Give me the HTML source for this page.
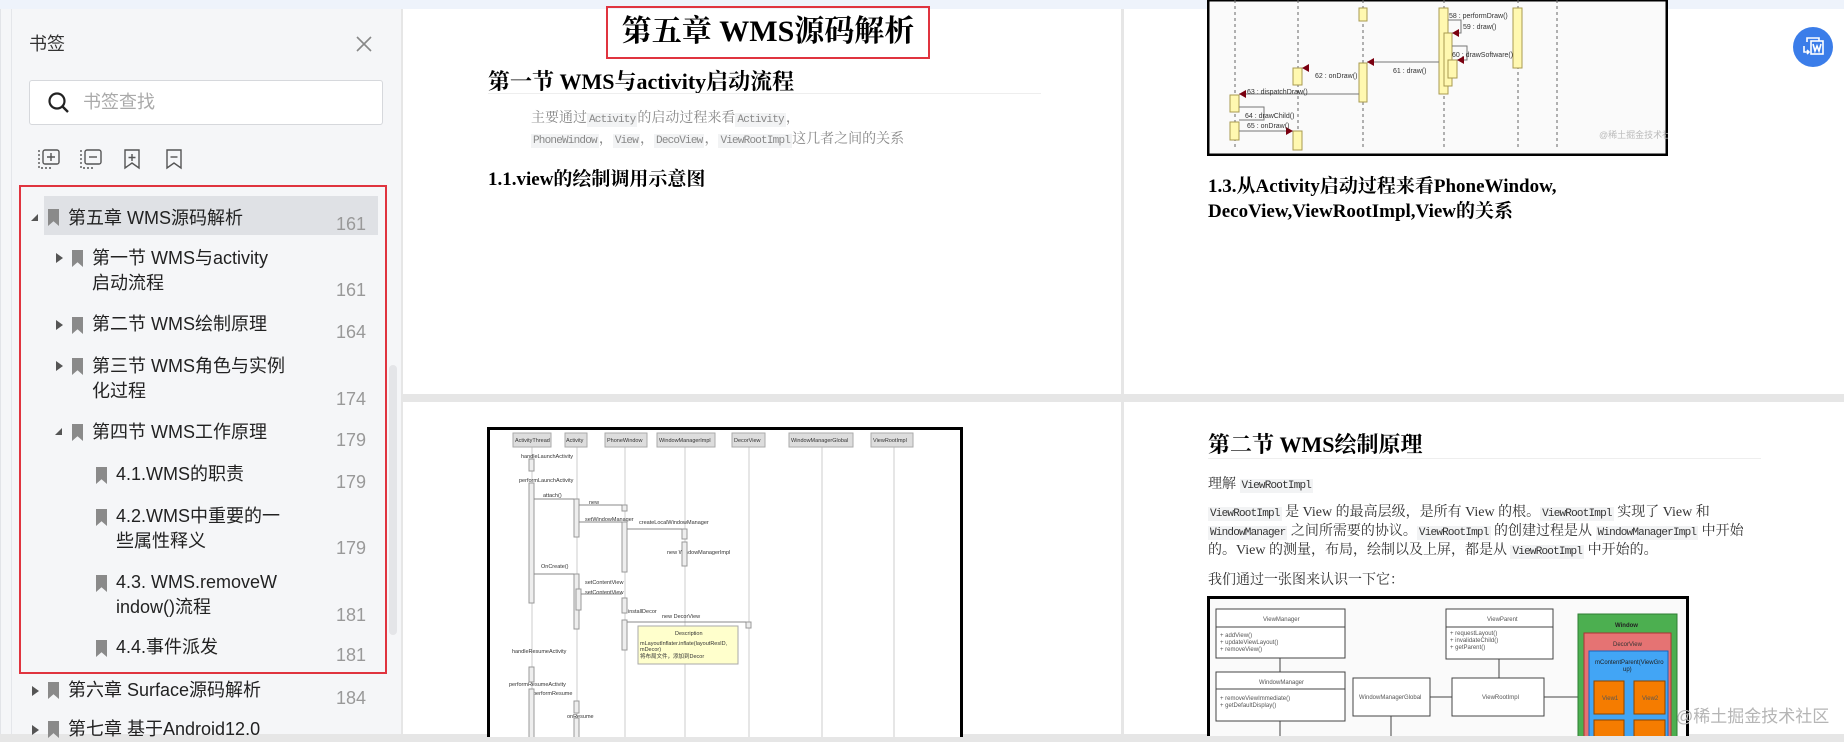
<!DOCTYPE html>
<html><head><meta charset="utf-8">
<style>
*{margin:0;padding:0;box-sizing:border-box}
body{width:1844px;height:734px;overflow:hidden;background:#e6e6e6;position:relative;font-family:"Liberation Sans","Noto Sans CJK SC",sans-serif}
.abs{position:absolute}
.top{left:0;top:0;width:1844px;height:9px;background:#eef3fb}
.side{left:0;top:9px;width:401px;height:725px;background:#f5f6f8;border-left:1px solid #e2e4e8}
.side .edge{left:10px;top:0;width:1px;height:725px;background:#e4e6ea}
.t{position:absolute;font-size:18px;color:#222;line-height:26px;white-space:nowrap}
.pg{position:absolute;font-size:18px;color:#999;right:35px;white-space:nowrap}
.bm{position:absolute;width:11px;height:17px;background:#8a8a8a;clip-path:polygon(0 0,100% 0,100% 100%,50% 72%,0 100%)}
.ar{position:absolute;width:0;height:0;border-top:5px solid transparent;border-bottom:5px solid transparent;border-left:7px solid #555}
.ad{position:absolute;width:0;height:0;border-left:7px solid transparent;border-bottom:7px solid #555}
.page{position:absolute;background:#fff}
.serif{font-family:"Liberation Serif","Noto Serif CJK SC",serif}
code{font-family:"Liberation Mono","Noto Sans CJK SC",monospace;background:#f2f3f4;font-size:11px;letter-spacing:-0.8px;padding:1px 2px}
h2{font-family:"Liberation Serif","Noto Serif CJK SC",serif;font-weight:bold}
</style></head><body>
<div class="abs top"></div>

<div class="abs side">
  <div class="abs edge"></div>
  <div class="t" style="left:28px;top:22px;color:#333">书签</div>
  <svg class="abs" style="left:355px;top:27px" width="16" height="16"><path d="M1 1L15 15M15 1L1 15" stroke="#888" stroke-width="1.6"/></svg>
  <div class="abs" style="left:28px;top:71px;width:354px;height:45px;background:#fff;border:1px solid #d6d8dc;border-radius:3px"></div>
  <svg class="abs" style="left:46px;top:82px" width="24" height="24"><circle cx="10" cy="10" r="7.5" stroke="#222" stroke-width="2.2" fill="none"/><path d="M15.5 15.5L21 21" stroke="#222" stroke-width="2.4"/></svg>
  <div class="t" style="left:82px;top:80px;color:#aaa">书签查找</div>
  <svg class="abs" style="left:36px;top:139px" width="150" height="22">
    <g stroke="#555" stroke-width="1.4" fill="none">
      <rect x="6" y="2" width="16" height="14" rx="2"/><path d="M14 5v8M10 9h8"/>
      <path d="M2 2v18h14" stroke-dasharray="2 2"/>
      <rect x="48" y="2" width="16" height="14" rx="2"/><path d="M52 9h8"/>
      <path d="M44 2v18h14" stroke-dasharray="2 2"/>
      <path d="M88 2h14v18l-7-5-7 5z"/><path d="M95 6v7M91.5 9.5h7"/>
      <path d="M130 2h14v18l-7-5-7 5z"/><path d="M133.5 9h7"/>
    </g>
  </svg>
  <div class="abs" style="left:18px;top:176px;width:368px;height:489px;border:2px solid #e0343f"></div>
  <div class="abs" style="left:43px;top:187px;width:334px;height:39px;background:#dfe1e5"></div>
  <div class="ad" style="left:30px;top:205px"></div><div class="bm" style="left:47px;top:200px"></div>
  <div class="t" style="left:67px;top:196px">第五章 WMS源码解析</div><div class="pg" style="top:205px">161</div>

  <div class="ar" style="left:55px;top:244px"></div><div class="bm" style="left:71px;top:241px"></div>
  <div class="t" style="left:91px;top:236px">第一节 WMS与activity</div><div class="t" style="left:91px;top:261px">启动流程</div><div class="pg" style="top:271px">161</div>

  <div class="ar" style="left:55px;top:311px"></div><div class="bm" style="left:71px;top:308px"></div>
  <div class="t" style="left:91px;top:302px">第二节 WMS绘制原理</div><div class="pg" style="top:313px">164</div>

  <div class="ar" style="left:55px;top:352px"></div><div class="bm" style="left:71px;top:349px"></div>
  <div class="t" style="left:91px;top:344px">第三节 WMS角色与实例</div><div class="t" style="left:91px;top:369px">化过程</div><div class="pg" style="top:380px">174</div>

  <div class="ad" style="left:54px;top:419px"></div><div class="bm" style="left:71px;top:415px"></div>
  <div class="t" style="left:91px;top:410px">第四节 WMS工作原理</div><div class="pg" style="top:421px">179</div>

  <div class="bm" style="left:95px;top:458px"></div>
  <div class="t" style="left:115px;top:452px">4.1.WMS的职责</div><div class="pg" style="top:463px">179</div>

  <div class="bm" style="left:95px;top:500px"></div>
  <div class="t" style="left:115px;top:494px">4.2.WMS中重要的一</div><div class="t" style="left:115px;top:519px">些属性释义</div><div class="pg" style="top:529px">179</div>

  <div class="bm" style="left:95px;top:566px"></div>
  <div class="t" style="left:115px;top:560px">4.3. WMS.removeW</div><div class="t" style="left:115px;top:585px">indow()流程</div><div class="pg" style="top:596px">181</div>

  <div class="bm" style="left:95px;top:631px"></div>
  <div class="t" style="left:115px;top:625px">4.4.事件派发</div><div class="pg" style="top:636px">181</div>

  <div class="ar" style="left:31px;top:677px"></div><div class="bm" style="left:47px;top:673px"></div>
  <div class="t" style="left:67px;top:668px">第六章 Surface源码解析</div><div class="pg" style="top:679px">184</div>

  <div class="ar" style="left:31px;top:716px"></div><div class="bm" style="left:47px;top:712px"></div>
  <div class="t" style="left:67px;top:707px">第七章 基于Android12.0</div>

  <div class="abs" style="left:388px;top:356px;width:8px;height:270px;background:#e4e5e8;border-radius:4px"></div>
</div>

<!-- page 1 -->
<div class="page" style="left:403px;top:9px;width:718px;height:385px">
  <div class="abs" style="left:203px;top:-3px;width:324px;height:53px;border:2px solid #e0343f"></div>
  <h2 class="abs" style="left:203px;width:324px;top:3px;text-align:center;font-size:30px;line-height:40px">第五章 WMS源码解析</h2>
  <h2 class="abs" style="left:85px;top:56px;font-size:22px">第一节 WMS与activity启动流程</h2>
  <div class="abs" style="left:85px;top:84px;width:553px;height:1px;background:#eee"></div>
  <div class="abs serif" style="left:128px;top:100px;font-size:14px;line-height:19px;color:#888">主要通过<code>Activity</code>的启动过程来看<code>Activity</code>，<br><code>PhoneWindow</code>，<code>View</code>，<code>DecoView</code>，<code>ViewRootImpl</code>这几者之间的关系</div>
  <h2 class="abs" style="left:85px;top:155px;font-size:19px">1.1.view的绘制调用示意图</h2>
</div>

<!-- page 2 -->
<div class="page" style="left:1124px;top:9px;width:720px;height:385px">
  <svg class="abs" style="left:83px;top:-9px" width="461" height="156">
    <rect x="1" y="0" width="459" height="155" fill="#fafafa" stroke="#000" stroke-width="3"/>
    <g stroke="#666" stroke-dasharray="3 3"><path d="M28 0v150M91 0v150M156 0v150M237 0v150M311 0v150M350 0v150"/></g>
    <g fill="#fff8b0" stroke="#a89a50">
      <rect x="152" y="8" width="8" height="13"/><rect x="306" y="8" width="9" height="60"/>
      <rect x="232" y="8" width="9" height="86"/><rect x="237" y="33" width="8" height="53"/><rect x="241" y="60" width="9" height="18"/>
      <rect x="152" y="63" width="8" height="39"/><rect x="86" y="68" width="9" height="17"/>
      <rect x="23" y="95" width="9" height="17"/><rect x="23" y="122" width="9" height="18"/><rect x="86" y="131" width="9" height="19"/>
    </g>
    <g stroke="#777" fill="none"><path d="M232 62H160M152 94H32M32 131H86M241 20h13v13h-9M245 46h15v14h-10M32 107h25v13H32"/></g>
    <g fill="#7a0010"><path d="M160 62l7-4v8zM95 68l7-4v8zM32 94l7-4v8zM86 131l-7-4v8zM245 33l7-4v8zM250 60l7-4v8z"/></g>
    <g font-family="Liberation Sans" font-size="7" fill="#333"><text x="242" y="18">58 : performDraw()</text><text x="256" y="29">59 : draw()</text><text x="245" y="57">60 : drawSoftware()</text><text x="186" y="73">61 : draw()</text><text x="108" y="78">62 : onDraw()</text><text x="40" y="94">63 : dispatchDraw()</text><text x="38" y="118">64 : drawChild()</text><text x="40" y="128">65 : onDraw()</text></g>
    <text x="392" y="138" font-family="Liberation Sans,Noto Sans CJK SC" font-size="9" fill="#bbb">@稀土掘金技术社区</text>
  </svg>
  <h2 class="abs" style="left:84px;top:165px;font-size:19px;line-height:25px">1.3.从Activity启动过程来看PhoneWindow,<br>DecoView,ViewRootImpl,View的关系</h2>
</div>

<!-- page 3 -->
<div class="page" style="left:403px;top:402px;width:718px;height:332px">
  <svg class="abs" style="left:84px;top:25px" width="476" height="310">
    <rect x="1.5" y="1.5" width="473" height="320" fill="#fff" stroke="#000" stroke-width="3"/>
    <g stroke="#ccc"><path d="M45 20v300M90 20v300M138 20v300M198 20v300M262 20v300M335 20v300M407 20v300"/></g>
    <g fill="#ddd" stroke="#aaa"><rect x="26" y="6" width="38" height="14"/><rect x="78" y="6" width="22" height="14"/><rect x="118" y="6" width="42" height="14"/><rect x="170" y="6" width="58" height="14"/><rect x="245" y="6" width="33" height="14"/><rect x="302" y="6" width="64" height="14"/><rect x="384" y="6" width="42" height="14"/></g>
    <g font-family="Liberation Sans" font-size="5.5" fill="#333"><text x="28" y="15">ActivityThread</text><text x="79" y="15">Activity</text><text x="120" y="15">PhoneWindow</text><text x="172" y="15">WindowManagerImpl</text><text x="247" y="15">DecorView</text><text x="304" y="15">WindowManagerGlobal</text><text x="386" y="15">ViewRootImpl</text>
      <text x="34" y="31">handleLaunchActivity</text><text x="32" y="55">performLaunchActivity</text><text x="56" y="70">attach()</text><text x="102" y="77">new</text><text x="98" y="94">setWindowManager</text><text x="152" y="97">createLocalWindowManager</text><text x="180" y="127">new WindowManagerImpl</text><text x="54" y="141">OnCreate()</text><text x="98" y="157">setContentView</text><text x="98" y="167">setContentView</text><text x="141" y="186">installDecor</text><text x="175" y="191">new DecorView</text><text x="25" y="226">handleResumeActivity</text><text x="22" y="259">performResumeActivity</text><text x="46" y="268">performResume</text><text x="80" y="291">onResume</text></g>
    <g fill="#eee" stroke="#999"><rect x="42" y="32" width="5" height="12"/><rect x="42" y="56" width="5" height="120"/><rect x="87" y="72" width="5" height="38"/><rect x="135" y="78" width="5" height="6"/><rect x="135" y="95" width="5" height="50"/><rect x="195" y="102" width="5" height="10"/><rect x="195" y="115" width="5" height="24"/><rect x="87" y="147" width="5" height="55"/><rect x="89" y="162" width="5" height="21"/><rect x="135" y="171" width="5" height="15"/><rect x="135" y="193" width="5" height="30"/><rect x="259" y="195" width="5" height="6"/><rect x="42" y="240" width="5" height="15"/><rect x="42" y="262" width="5" height="60"/><rect x="87" y="274" width="5" height="12"/><rect x="87" y="291" width="5" height="30"/></g>
    <g stroke="#888" fill="none"><path d="M47 72h40M92 78h43M92 95h43M140 102h55M47 147h40M94 167h41M140 195h119"/></g>
    <rect x="151" y="199" width="100" height="38" fill="#ffffcc" stroke="#aaa"/>
    <g font-family="Liberation Sans,Noto Sans CJK SC" font-size="5.5" fill="#333"><text x="188" y="208">Description</text><text x="153" y="218">mLayoutInflater.inflate(layoutResID,</text><text x="153" y="224">mDecor)</text><text x="153" y="231">将布局文件，添加到Decor</text></g>
  </svg>
</div>

<!-- page 4 -->
<div class="page" style="left:1124px;top:402px;width:720px;height:332px">
  <h2 class="abs" style="left:84px;top:26px;font-size:22px">第二节 WMS绘制原理</h2>
  <div class="abs" style="left:84px;top:56px;width:553px;height:1px;background:#eee"></div>
  <div class="abs serif" style="left:84px;top:71px;font-size:14px;color:#333">理解 <code>ViewRootImpl</code></div>
  <div class="abs serif" style="left:84px;top:102px;font-size:14px;line-height:18px;color:#333;white-space:nowrap"><code>ViewRootImpl</code> 是 View 的最高层级，是所有 View 的根。<code>ViewRootImpl</code> 实现了 View 和<br><code>WindowManager</code> 之间所需要的协议。<code>ViewRootImpl</code> 的创建过程是从 <code>WindowManagerImpl</code> 中开始<br>的。View 的测量，布局，绘制以及上屏，都是从 <code>ViewRootImpl</code> 中开始的。</div>
  <div class="abs serif" style="left:84px;top:167px;font-size:14px;color:#333">我们通过一张图来认识一下它：</div>
  <svg class="abs" style="left:83px;top:194px" width="482" height="140">
    <rect x="1.5" y="1.5" width="479" height="150" fill="#fafafa" stroke="#000" stroke-width="3"/>
    <g fill="#fff" stroke="#444"><rect x="9" y="13" width="129" height="49"/><rect x="9" y="76" width="129" height="49"/><rect x="146" y="82" width="77" height="38"/><rect x="245" y="82" width="92" height="38"/><rect x="239" y="13" width="107" height="50"/></g>
    <g stroke="#444"><path d="M9 31h129M9 93h129M239 31h107M73 62v14M73 125v20M184 120v20M292 63v19M223 101h22M337 101h34"/></g>
    <rect x="371" y="18" width="99" height="130" fill="#4caf50" stroke="#2e7d32"/>
    <rect x="377" y="37" width="87" height="110" fill="#e57373" stroke="#a33"/>
    <rect x="382" y="55" width="79" height="90" fill="#42a5f5" stroke="#1565c0"/>
    <g fill="#f57c00" stroke="#8a4500"><rect x="387" y="85" width="30" height="33"/><rect x="427" y="85" width="31" height="33"/><rect x="387" y="124" width="30" height="30"/><rect x="427" y="124" width="31" height="30"/></g>
    <g font-family="Liberation Sans" font-size="6" fill="#555"><text x="56" y="25">ViewManager</text><text x="13" y="41">+ addView()</text><text x="13" y="48">+ updateViewLayout()</text><text x="13" y="55">+ removeView()</text><text x="52" y="88">WindowManager</text><text x="13" y="104">+ removeViewImmediate()</text><text x="13" y="111">+ getDefaultDisplay()</text><text x="152" y="103">WindowManagerGlobal</text><text x="275" y="103">ViewRootImpl</text><text x="280" y="25">ViewParent</text><text x="243" y="39">+ requestLayout()</text><text x="243" y="46">+ invalidateChild()</text><text x="243" y="53">+ getParent()</text><text x="408" y="31" font-weight="bold" fill="#222">Window</text><text x="406" y="50" fill="#333">DecorView</text><text x="388" y="68" fill="#222">mContentParent(ViewGro</text><text x="416" y="75" fill="#222">up)</text><text x="395" y="104">View1</text><text x="435" y="104">View2</text></g>
  </svg>
  <div class="abs" style="left:552px;top:300px;font-size:17px;color:#b5b5b5;font-family:'Liberation Sans','Noto Sans CJK SC',sans-serif">@稀土掘金技术社区</div>
</div>

<div class="abs" style="left:1793px;top:27px;width:40px;height:40px;border-radius:50%;background:#3b7de9"></div>
<svg class="abs" style="left:1793px;top:27px" width="40" height="40"><g stroke="#fff" stroke-width="1.6" fill="none"><path d="M14 15v-4h12v3"/><rect x="18" y="14" width="12" height="13" fill="#3b7de9"/><path d="M20 17l2 7 2-5 2 5 2-7"/><path d="M11 19v6h5M14 23l2 2-2 2"/></g></svg>
</body></html>
